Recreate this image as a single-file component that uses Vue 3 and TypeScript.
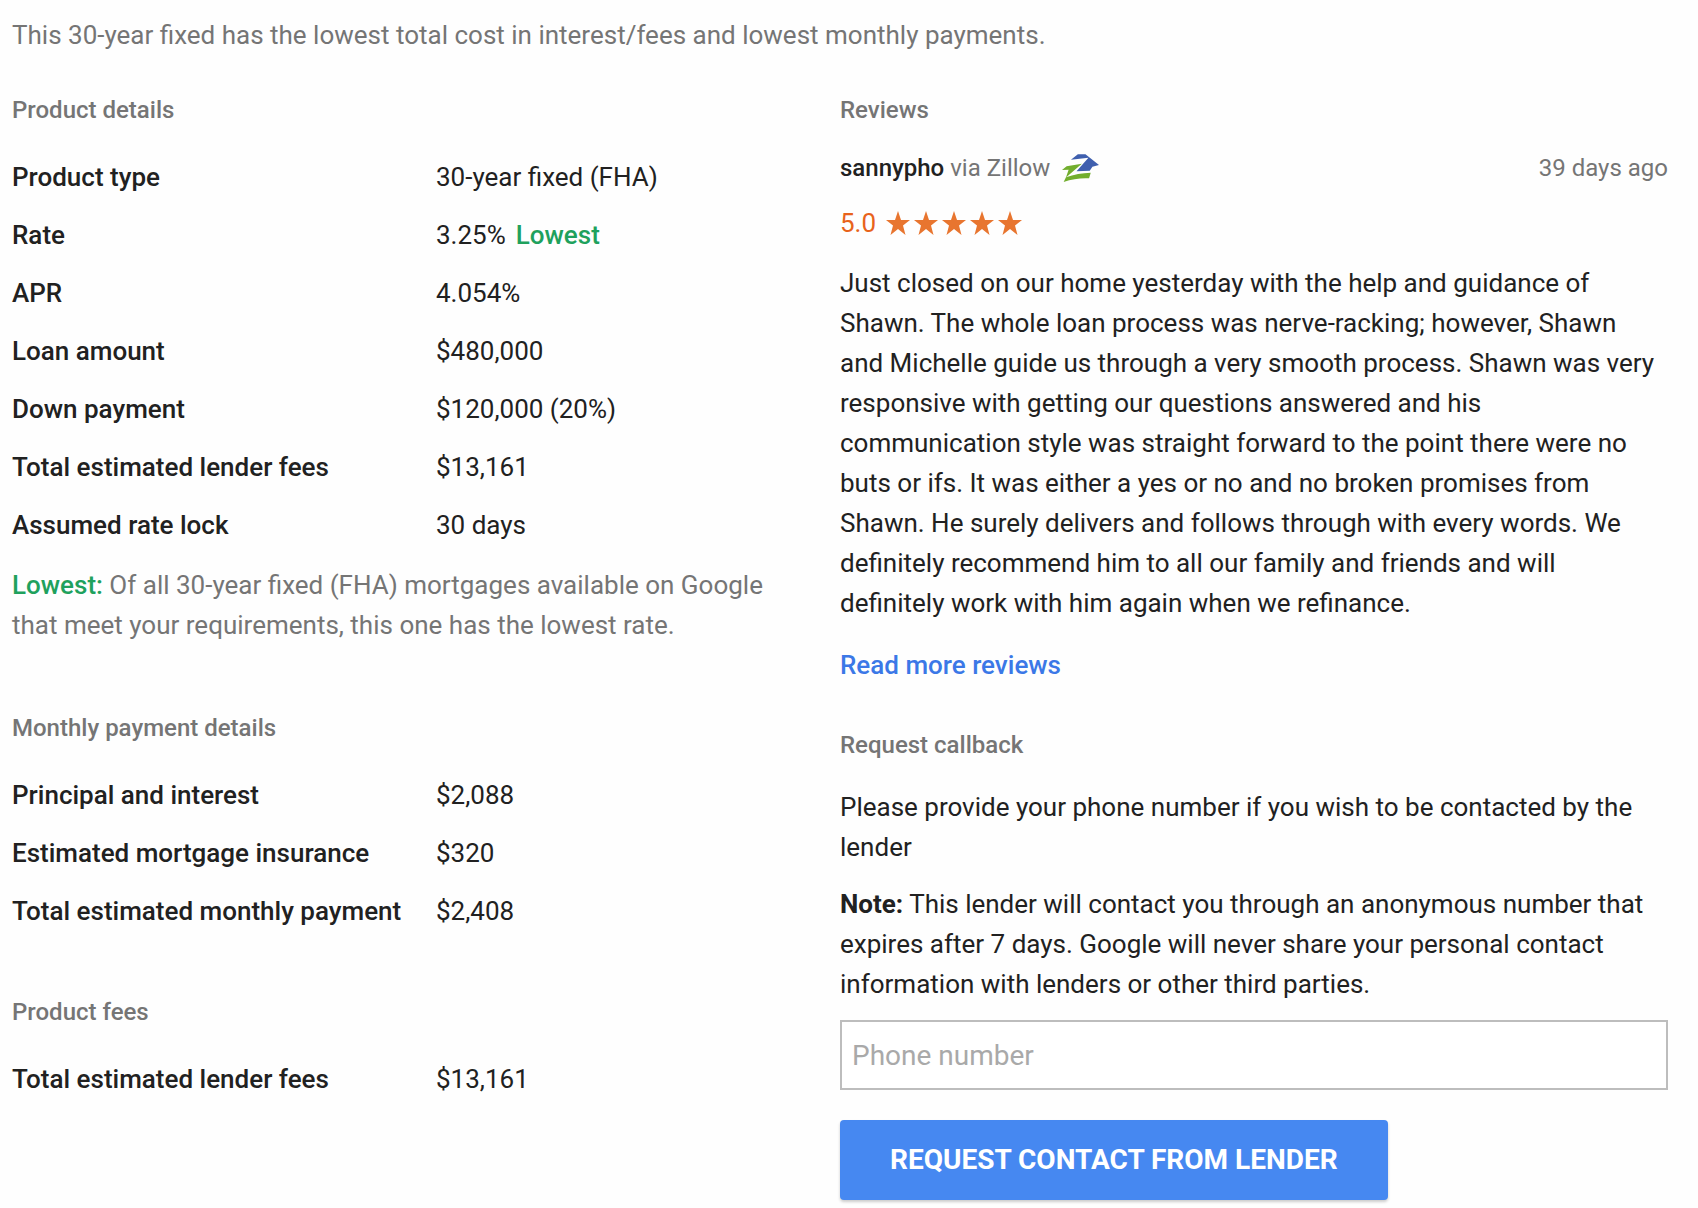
<script setup lang="ts">
import { ref } from 'vue'

interface DetailRow {
  label: string
  value: string
  badge?: string
}

interface DetailSection {
  title: string
  rows: DetailRow[]
  note?: string
}

const sections: DetailSection[] = [
  {
    title: 'Product details',
    rows: [
      { label: 'Product type', value: '30-year fixed (FHA)' },
      { label: 'Rate', value: '3.25%', badge: 'Lowest' },
      { label: 'APR', value: '4.054%' },
      { label: 'Loan amount', value: '$480,000' },
      { label: 'Down payment', value: '$120,000 (20%)' },
      { label: 'Total estimated lender fees', value: '$13,161' },
      { label: 'Assumed rate lock', value: '30 days' },
    ],
    note: 'Of all 30-year fixed (FHA) mortgages available on Google that meet your requirements, this one has the lowest rate.',
  },
  {
    title: 'Monthly payment details',
    rows: [
      { label: 'Principal and interest', value: '$2,088' },
      { label: 'Estimated mortgage insurance', value: '$320' },
      { label: 'Total estimated monthly payment', value: '$2,408' },
    ],
  },
  {
    title: 'Product fees',
    rows: [{ label: 'Total estimated lender fees', value: '$13,161' }],
  },
]

const reviewText = `Just closed on our home yesterday with the help and guidance of Shawn. The whole loan process was nerve-racking; however, Shawn and Michelle guide us through a very smooth process. Shawn was very responsive with getting our questions answered and his
communication style was straight forward to the point there were no buts or ifs. It was either a yes or no and no broken promises from Shawn. He surely delivers and follows through with every words. We definitely recommend him to all our family and friends and will definitely work with him again when we refinance.`

const phone = ref('')
</script>

<template>
  <main class="page">
    <p class="intro">This 30-year fixed has the lowest total cost in interest/fees and lowest monthly payments.</p>
    <div class="columns">
      <div class="left">
        <section v-for="section in sections" :key="section.title" class="details">
          <h2 class="heading">{{ section.title }}</h2>
          <table class="table">
            <tbody>
              <tr v-for="row in section.rows" :key="row.label">
                <th scope="row">{{ row.label }}</th>
                <td>{{ row.value }}<strong v-if="row.badge" class="lowest badge">{{ row.badge }}</strong></td>
              </tr>
            </tbody>
          </table>
          <p v-if="section.note" class="note"><strong class="lowest">Lowest:</strong> {{ section.note }}</p>
        </section>
      </div>

      <div class="right">
        <section class="reviews">
          <h2 class="heading">Reviews</h2>
          <div class="author">
            <span class="name">sannypho</span>
            <span class="muted">via Zillow</span>
            <svg class="zillow" viewBox="0 0 112 84" aria-hidden="true">
              <path fill="#3f5fae" d="M27 17 48 0H71L112 33 92 38 84 50 44 52 80 11Z" />
              <path fill="#72ae2e" d="M0 48 14 37 60 29 12 71 20 47Z" />
              <path fill="#72ae2e" d="M12 70Q48 57 87 56L82 73Q43 71 5 84Z" />
            </svg>
            <span class="muted age">39 days ago</span>
          </div>
          <div class="rating">
            <span>5.0</span>
            <span class="stars" role="img" aria-label="5 out of 5 stars">
              <svg v-for="n in 5" :key="n" class="star" viewBox="0 0 24 24">
                <path d="M12 0 15 9H24L17 14.500 19.500 24 12 18 4.500 24 7 14.500 0 9H9Z" />
              </svg>
            </span>
          </div>
          <p class="review">{{ reviewText }}</p>
          <a class="more" href="#reviews">Read more reviews</a>
        </section>

        <section>
          <h2 class="heading">Request callback</h2>
          <form class="callback" @submit.prevent>
            <label class="prompt" for="phone">Please provide your phone number if you wish to be contacted by the lender</label>
            <p class="privacy"><strong>Note:</strong> This lender will contact you through an anonymous number that expires after 7 days. Google will never share your personal contact information with lenders or other third parties.</p>
            <input id="phone" v-model="phone" class="phone" type="tel" placeholder="Phone number" />
            <button class="submit" type="submit">REQUEST CONTACT FROM LENDER</button>
          </form>
        </section>
      </div>
    </div>
  </main>
</template>

<style>
body {
  margin: 0;
  background: #fefefe;
}
</style>

<style scoped>
.page {
  padding: 15px 30px 8px 12px;
  color: #212121;
  font-family: Roboto, 'Liberation Sans', sans-serif;
  font-size: 26px;
  line-height: 40px;
}
p,
h2 {
  margin: 0;
}
strong {
  font-weight: 700;
}
.intro,
.note,
.muted {
  color: #757575;
}
.columns {
  display: grid;
  grid-template-columns: 1fr 1fr;
  margin-top: 35px;
}
.left {
  display: flex;
  flex-direction: column;
  gap: 52px;
  padding-right: 28px;
}
.heading {
  color: #757575;
  font-size: 24px;
  font-weight: 500;
}
.table {
  width: 100%;
  margin-top: 18px;
  border-collapse: collapse;
  table-layout: fixed;
}
.table th,
.table td {
  padding: 9px 0;
  text-align: left;
}
.table th {
  width: 53%;
  font-weight: 500;
}
.lowest {
  color: #1fa15d;
  font-weight: 500;
}
.badge {
  margin-left: 10px;
}
.note {
  margin: 11px 0;
}
.reviews {
  margin-bottom: 40px;
}
.author {
  display: flex;
  align-items: center;
  margin-top: 18px;
  font-size: 24px;
}
.name {
  margin-right: 6px;
  font-weight: 500;
}
.zillow {
  width: 37px;
  height: 28px;
  margin-left: 12px;
}
.age {
  margin-left: auto;
}
.rating {
  display: flex;
  align-items: center;
  gap: 10px;
  margin: 15px 0 20px;
  color: #e8631b;
}
.stars {
  display: flex;
  gap: 4px;
}
.star {
  width: 24px;
  height: 24px;
  fill: #e8752f;
}
.review {
  padding-right: 8px;
  white-space: pre-line;
}
.more {
  display: block;
  width: fit-content;
  margin-top: 22px;
  color: #3b78e7;
  font-weight: 500;
  text-decoration: none;
}
.callback {
  display: flex;
  flex-direction: column;
  align-items: flex-start;
  margin-top: 22px;
}
.privacy {
  margin: 17px 0 16px;
}
.phone {
  box-sizing: border-box;
  width: 100%;
  height: 70px;
  padding: 0 10px;
  border: 2px solid #bdbdbd;
  border-radius: 0;
  background: #fff;
  color: inherit;
  font: inherit;
  font-size: 28px;
}
.phone::placeholder {
  color: #a9a9a9;
  opacity: 1;
}
.submit {
  height: 80px;
  margin-top: 30px;
  padding: 0 50px;
  border: 0;
  border-radius: 4px;
  background: #4688f1;
  box-shadow: 0 2px 3px rgba(0, 0, 0, 0.2);
  color: #fff;
  font: inherit;
  font-size: 28px;
  font-weight: 700;
}
</style>
